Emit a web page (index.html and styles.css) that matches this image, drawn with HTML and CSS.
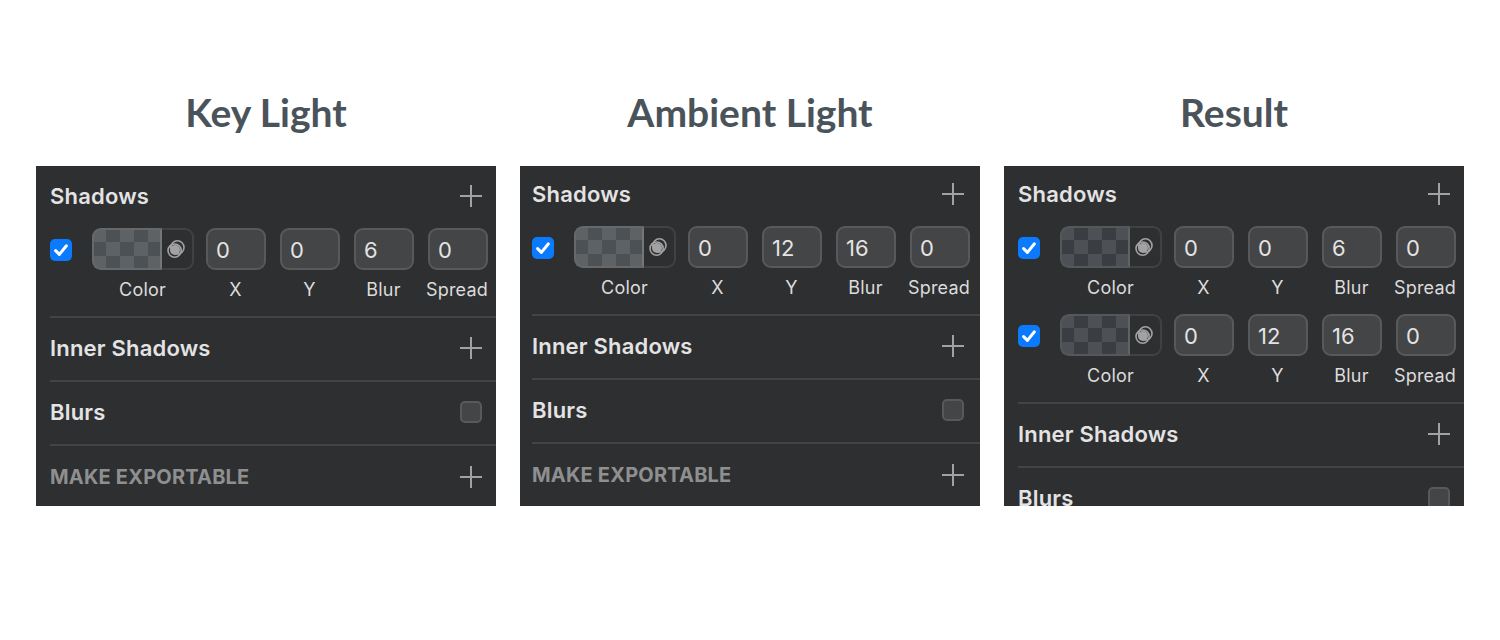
FILE: index.html
```html
<!DOCTYPE html>
<html lang="en">
<head>
    <meta charset="UTF-8">
    <title>Key Light, Ambient Light, Result</title>
    <link rel="stylesheet" href="styles.css">
</head>
<body>
    <main class="compare">
        <!-- Key Light -->
        <section class="column column-key">
            <h2>Key Light</h2>
            <div class="panel">
                <div class="head"><h3>Shadows</h3><span class="plus"></span></div>
                <div class="shadow-row">
                    <span class="check"><svg viewBox="0 0 22 22"><path d="M5.6 11.6l3.8 3.8L16.4 6.8"/></svg></span>
                    <div class="color-field">
                        <div class="color-box"><span class="swatch"></span><span class="mode"><svg viewBox="0 0 20 20"><circle cx="11.4" cy="8.4" r="6.6"/><circle cx="8.6" cy="11.6" r="6.6"/><circle class="fill" cx="9" cy="11" r="5"/></svg></span></div>
                        <label>Color</label>
                    </div>
                    <div class="num-field"><div class="num">0</div><label>X</label></div>
                    <div class="num-field"><div class="num">0</div><label>Y</label></div>
                    <div class="num-field"><div class="num">6</div><label>Blur</label></div>
                    <div class="num-field"><div class="num">0</div><label>Spread</label></div>
                </div>
                <div class="row"><h3>Inner Shadows</h3><span class="plus"></span></div>
                <div class="row"><h3>Blurs</h3><span class="empty-check"></span></div>
                <div class="row export"><h3>MAKE EXPORTABLE</h3><span class="plus"></span></div>
            </div>
        </section>

        <!-- Ambient Light -->
        <section class="column column-ambient">
            <h2>Ambient Light</h2>
            <div class="panel">
                <div class="head"><h3>Shadows</h3><span class="plus"></span></div>
                <div class="shadow-row">
                    <span class="check"><svg viewBox="0 0 22 22"><path d="M5.6 11.6l3.8 3.8L16.4 6.8"/></svg></span>
                    <div class="color-field">
                        <div class="color-box"><span class="swatch"></span><span class="mode"><svg viewBox="0 0 20 20"><circle cx="11.4" cy="8.4" r="6.6"/><circle cx="8.6" cy="11.6" r="6.6"/><circle class="fill" cx="9" cy="11" r="5"/></svg></span></div>
                        <label>Color</label>
                    </div>
                    <div class="num-field"><div class="num">0</div><label>X</label></div>
                    <div class="num-field"><div class="num">12</div><label>Y</label></div>
                    <div class="num-field"><div class="num">16</div><label>Blur</label></div>
                    <div class="num-field"><div class="num">0</div><label>Spread</label></div>
                </div>
                <div class="row"><h3>Inner Shadows</h3><span class="plus"></span></div>
                <div class="row"><h3>Blurs</h3><span class="empty-check"></span></div>
                <div class="row export"><h3>MAKE EXPORTABLE</h3><span class="plus"></span></div>
            </div>
        </section>

        <!-- Result -->
        <section class="column column-result">
            <h2>Result</h2>
            <div class="panel">
                <div class="head"><h3>Shadows</h3><span class="plus"></span></div>
                <div class="shadow-row">
                    <span class="check"><svg viewBox="0 0 22 22"><path d="M5.6 11.6l3.8 3.8L16.4 6.8"/></svg></span>
                    <div class="color-field">
                        <div class="color-box"><span class="swatch swatch-dark"></span><span class="mode"><svg viewBox="0 0 20 20"><circle cx="11.4" cy="8.4" r="6.6"/><circle cx="8.6" cy="11.6" r="6.6"/><circle class="fill" cx="9" cy="11" r="5"/></svg></span></div>
                        <label>Color</label>
                    </div>
                    <div class="num-field"><div class="num">0</div><label>X</label></div>
                    <div class="num-field"><div class="num">0</div><label>Y</label></div>
                    <div class="num-field"><div class="num">6</div><label>Blur</label></div>
                    <div class="num-field"><div class="num">0</div><label>Spread</label></div>
                </div>
                <div class="shadow-row">
                    <span class="check"><svg viewBox="0 0 22 22"><path d="M5.6 11.6l3.8 3.8L16.4 6.8"/></svg></span>
                    <div class="color-field">
                        <div class="color-box"><span class="swatch swatch-dark"></span><span class="mode"><svg viewBox="0 0 20 20"><circle cx="11.4" cy="8.4" r="6.6"/><circle cx="8.6" cy="11.6" r="6.6"/><circle class="fill" cx="9" cy="11" r="5"/></svg></span></div>
                        <label>Color</label>
                    </div>
                    <div class="num-field"><div class="num">0</div><label>X</label></div>
                    <div class="num-field"><div class="num">12</div><label>Y</label></div>
                    <div class="num-field"><div class="num">16</div><label>Blur</label></div>
                    <div class="num-field"><div class="num">0</div><label>Spread</label></div>
                </div>
                <div class="row"><h3>Inner Shadows</h3><span class="plus"></span></div>
                <div class="row"><h3>Blurs</h3><span class="empty-check"></span></div>
            </div>
        </section>
    </main>
</body>
</html>
```
FILE: styles.css
```css
body {
    margin: 0;
    background-color: #fff;
    font-family: 'Inter', 'Liberation Sans', sans-serif;
}

.compare {
    display: flex;
    gap: 24px;
    padding: 0 36px;
}

.column {
    width: 460px;
}

h2 {
    margin: 0;
    padding-top: 89px;
    height: 77px;
    font-family: 'Lato', sans-serif;
    font-size: 39px;
    line-height: 46px;
    font-weight: 700;
    color: #4a535a;
    text-align: center;
}

/* Panel */
.panel {
    height: 340px;
    overflow: hidden;
    padding-left: 14px;
    background-color: #2e2f31;
    color: #e3e3e3;
}

.column-ambient .panel {
    padding-left: 12px;
}

h3 {
    margin: 0;
    font-size: 22px;
    line-height: 28px;
    font-weight: 600;
    letter-spacing: 0.2px;
}

.head {
    display: flex;
    align-items: center;
    justify-content: space-between;
    height: 56px;
    padding: 0 14px 4px 0;
}

.column-key .head {
    height: 60px;
    padding-bottom: 2px;
}

.column-ambient .head,
.column-ambient .row {
    padding-right: 16px;
}

.row {
    display: flex;
    align-items: center;
    justify-content: space-between;
    height: 60px;
    padding: 0 14px 2px 0;
    border-top: 2px solid #434446;
}

.export {
    height: 62px;
    padding-bottom: 0;
}

.export h3 {
    color: #8f8f90;
    font-size: 20px;
    font-weight: 700;
}

.plus {
    width: 22px;
    height: 22px;
    background:
        linear-gradient(#a2a2a3, #a2a2a3) center / 22px 2px no-repeat,
        linear-gradient(#a2a2a3, #a2a2a3) center / 2px 22px no-repeat;
}

.empty-check {
    width: 22px;
    height: 22px;
    box-sizing: border-box;
    border: 2px solid #58595a;
    border-radius: 5px;
    background-color: #444546;
}

/* Shadow row */
.shadow-row {
    display: flex;
    align-items: flex-start;
    justify-content: flex-end;
    gap: 14px;
    height: 88px;
    padding-right: 8px;
}

.column-ambient .shadow-row {
    padding-right: 10px;
}

.check {
    width: 22px;
    height: 22px;
    margin: 11px auto 0 0;
    border-radius: 5px;
    background-color: #0a7bff;
}

.check svg {
    display: block;
    width: 22px;
    height: 22px;
}

.check path {
    fill: none;
    stroke: #fff;
    stroke-width: 3;
    stroke-linecap: round;
    stroke-linejoin: round;
}

.color-field {
    width: 102px;
    margin-right: -2px;
}

.color-box {
    display: flex;
    height: 42px;
}

.swatch {
    width: 70px;
    box-sizing: border-box;
    border: 2px solid #66696c;
    border-right-color: #74777a;
    border-radius: 9px 0 0 9px;
    background: repeating-conic-gradient(#4c5156 0 25%, #5e6265 0 50%) -2px -2px / 28px 28px;
}

.swatch-dark {
    border-color: #55585b;
    border-right-color: #606366;
    background: repeating-conic-gradient(#3a3e43 0 25%, #4d5155 0 50%) -2px -2px / 28px 28px;
}

.mode {
    display: flex;
    flex: 1;
    align-items: center;
    justify-content: center;
    box-sizing: border-box;
    border: 2px solid #404143;
    border-left: 0;
    border-radius: 0 9px 9px 0;
}

.mode svg {
    width: 20px;
    height: 20px;
    margin-left: -2px;
}

.mode circle {
    fill: none;
    stroke: #a2a2a3;
    stroke-width: 1.6;
}

.mode circle.fill {
    fill: #a2a2a3;
    stroke: none;
}

.num-field {
    width: 60px;
}

.num {
    height: 42px;
    box-sizing: border-box;
    padding-left: 8px;
    border: 2px solid #58595a;
    border-radius: 9px;
    background-color: #444546;
    font-size: 22px;
    line-height: 40px;
    color: #e3e3e3;
}

label {
    display: block;
    margin: 8px 0.5px 0 -0.5px;
    font-size: 18px;
    line-height: 24px;
    letter-spacing: 0.2px;
    text-align: center;
    white-space: nowrap;
    color: #dcdcdc;
}

.num-field:last-child label {
    margin-left: -5px;
    margin-right: -3px;
}
```
